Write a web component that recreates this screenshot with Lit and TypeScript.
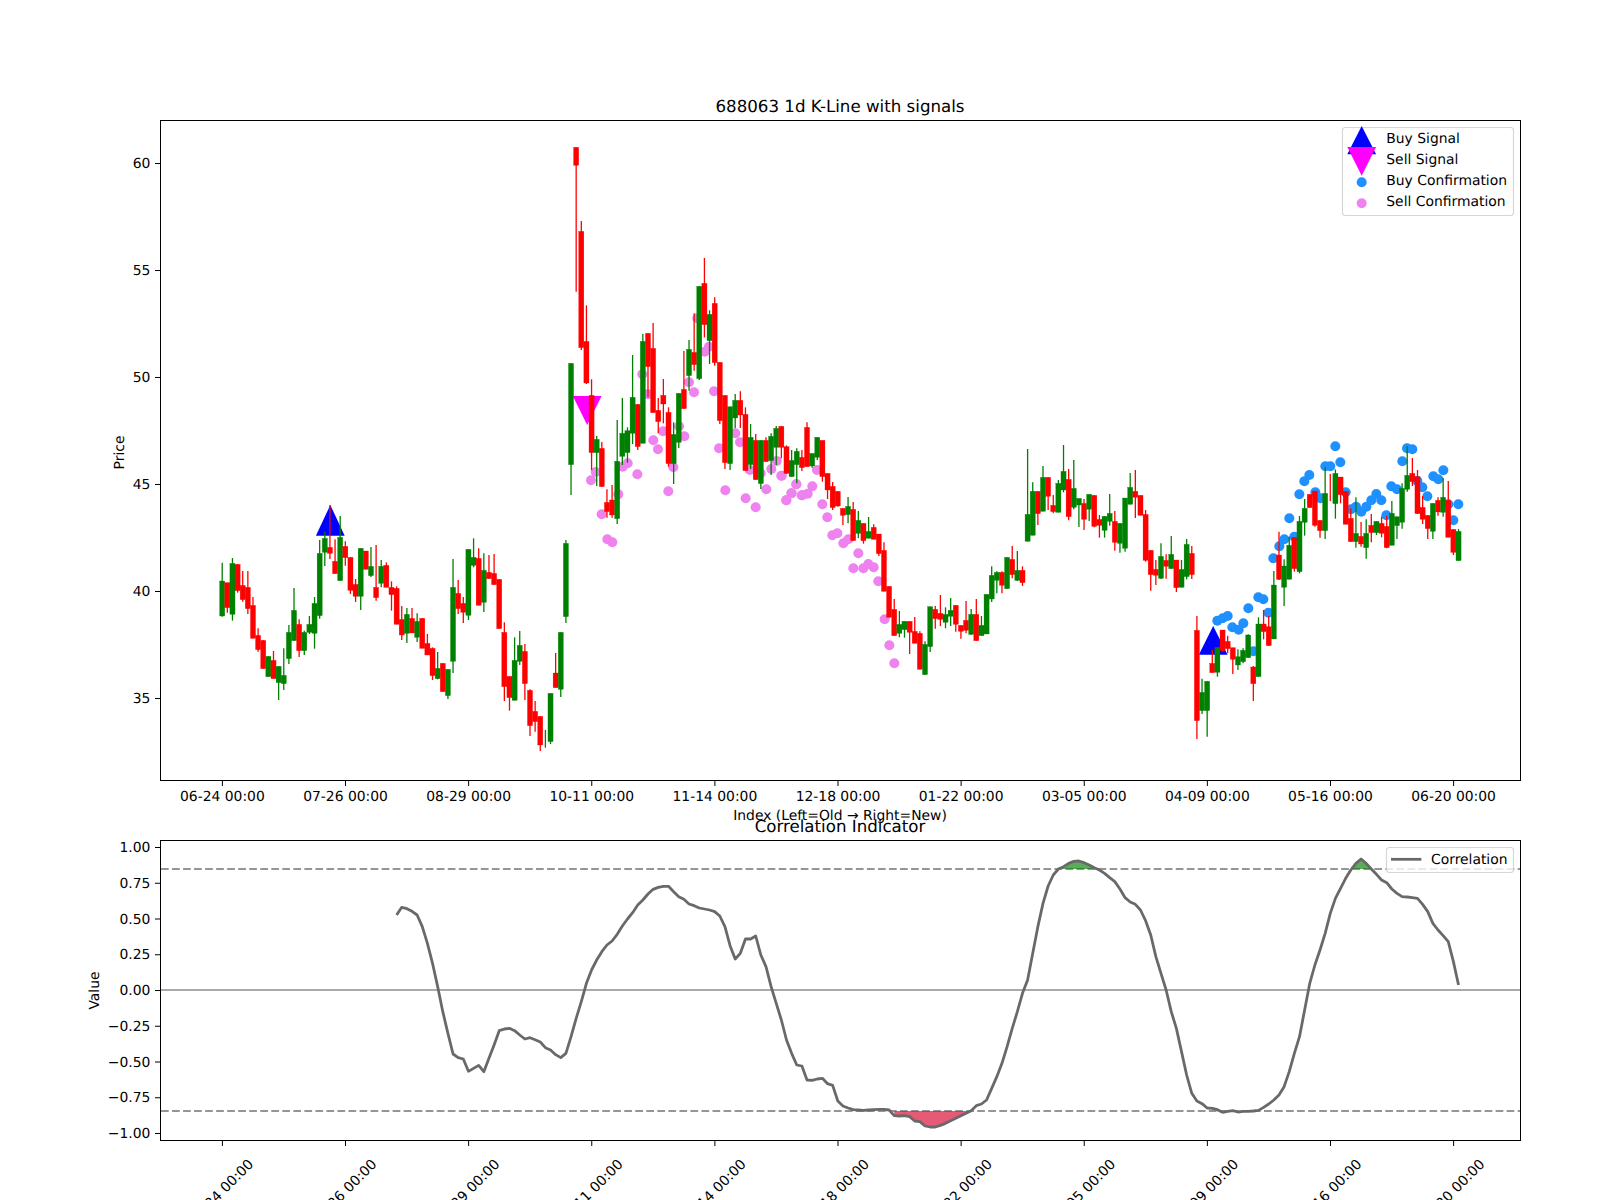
import { LitElement, html, svg, css, nothing } from "lit";
import { customElement } from "lit/decorators.js";

/* Candles measured from the chart: colour, then wick top, body top, body bottom, wick bottom, in pixels from each segment's origin at 1/3 px units. */
type Candle = { up: boolean; wt: number; bt: number; bb: number; wb: number };

function seg(off: number, rows: string): Candle[] {
  return rows
    .trim()
    .split(/\s+/)
    .map((r) => {
      const [wt, bt, bb, wb] = r.slice(1).split(",").map((n) => off + Number(n) / 3);
      return { up: r[0] === "r", wt, bt, bb, wb };
    });
}

const candles: Candle[] = [
  ...seg(480, `g248,303,408,410 r308,308,383,398 g234,250,403,422 r253,253,332,338 r273,316,359,365 r273,322,386,402
  r351,376,475,475 r445,466,509,515 r481,481,566,566 g529,529,590,590 r513,541,596,597 g559,559,608,660 g505,586,611,630
  g435,457,536,552 g324,391,482,482 r418,433,512,531 g452,457,512,525 g408,433,457,462 g351,370,460,506 g180,220,407,416
  g155,175,217,258 r75,202,220,237 r178,244,281,281 g108,172,302,302 r184,199,233,257 r232,232,331,342 r297,313,349,366
  g205,205,349,390 r213,213,268,268 g201,259,287,291 r195,322,353,362 g240,259,310,322 r247,256,322,322 r304,322,344,392
  r319,325,433,433 r378,418,465,480 g384,403,460,489 r384,415,459,459 g400,424,472,486 r415,415,505,505 r462,490,525,525
  r502,505,587,600 g516,565,596,598 r550,550,635,635 g568,568,647,657 g237,322,544,579 r300,340,386,402 r351,370,397,429
  g208,208,406,420 g175,232,256,262 r205,235,376,376 g220,271,367,396 r225,277,296,296 r222,280,314,314 r298,298,446,446
  r427,457,620,663 r589,589,653,692 g472,541,661,661 g453,496,544,555 r492,514,611,660 r628,631,737,768 r663,694,725,755
  r709,709,795,813 g750,783,785,803 g640,640,785,792 r519,579,623,623 g457,457,628,651 g180,190,410,429`),
  ...seg(130, `g700,700,1004,1095 r52,52,106,485 r273,304,653,660 r526,634,759,762 r748,796,968,1020 g918,928,968,1068
  r936,955,1070,1070 r1078,1117,1145,1163 r1065,1110,1155,1163 g870,994,1166,1182 g804,910,979,1005 g892,902,968,998
  g675,802,910,942 r823,823,950,960 g612,634,940,940 r610,610,710,802 r579,655,848,848 r804,841,875,910 r747,796,822,880
  r832,847,1001,1010 g877,913,1001,1062 g790,790,937,954 r663,778,836,836 g630,658,737,782 r550,667,704,722 g469,469,746,750
  r384,460,584,622 g541,553,632,702 r502,520,698,707 r697,697,872,882 r796,796,998,1017 g830,830,1001,1020 g792,811,864,895
  r784,811,855,894 r832,853,1022,1022 g882,922,1004,1017 r912,931,1049,1049 g931,931,1061,1077 r922,931,995,995
  g910,919,992,1035 g888,895,952,1005 r889,889,952,985 r946,950,1030,1032 g960,991,1040,1040 g955,964,1004,1060`),
  ...seg(380, `r210,232,263,273 r127,142,260,260 g222,220,258,263 g172,172,232,240 r181,181,290,305 r280,280,330,357 r306,319,383,390
  r334,334,378,380 r385,385,406,435 g351,379,404,430 r366,388,482,482 g393,421,460,475 r430,430,482,491 g411,454,475,475
  r433,442,478,478 r462,462,521,528 r487,511,634,634 r619,619,712,712 r657,688,767,767 g693,733,760,772 g724,724,749,773
  r724,724,757,822 r711,754,790,790 r754,760,868,868 g784,793,884,884 g680,680,800,816 r678,688,716,746 r645,700,718,738
  g682,703,727,745 g654,691,709,738 r676,676,733,755 r736,736,754,776 r663,721,751,760 g687,703,763,765 r657,703,782,782
  g708,736,767,767 g643,643,762,762 g559,586,657,666 g574,577,601,640 r574,577,616,640 g532,532,626,626 r498,538,584,595
  g513,571,601,603 r559,571,608,618 g207,403,484,484 g307,334,466,466 r334,334,401,435 g258,292,394,394 r292,292,349,390
  r345,376,395,400 g300,310,397,397 g195,274,330,337 r267,298,410,421 g240,325,382,388 g360,355,375,441 r357,370,418,450
  g343,343,388,423 r346,346,439,442 r405,418,436,473 g408,409,451,473 g342,400,424,437 r393,424,487,512 g430,430,490,518
  g354,354,505,515 g279,322,373,373 r270,334,352,414 r346,346,406,406 r390,403,541,545 r511,511,584,632 r540,568,586,615
  g490,529,595,597 r523,541,559,596 g468,523,566,566 r540,540,623,636`),
  ...seg(420, `g420,448,502,502 g357,373,470,478 r378,400,464,477 r588,631,902,957 g776,817,872,882 g784,784,872,950 r690,730,758,758
  g682,682,757,770 r630,630,692,696 r647,664,686,700 r683,683,718,762 g688,710,735,750 g685,691,725,730 g643,645,713,713
  r738,741,791,843 g592,612,770,770`),
  ...seg(580, `r90,132,155,178 r108,140,197,197`),
  ...seg(420, `g453,495,657,657 r335,405,478,480 g418,438,502,558 g350,376,478,478 r352,352,446,455 g288,304,455,460 g237,265,307,347
  r223,223,263,263 r213,213,316,320 r301,301,332,353 g141,220,332,357 r162,200,201,243 g148,160,251,296 r171,171,224,250
  r214,214,313,313 r265,295,365,365 g232,340,365,383 r306,349,372,380 g298,340,383,416 r282,316,338,367 g304,304,338,345
  r290,310,340,352 r288,319,383,385 g243,280,376,376 g290,290,317,357 g190,205,307,326 g78,166,208,215 r114,160,185,198
  r150,170,281,282 r228,262,298,312 r285,286,326,357 g250,250,334,357 r232,241,276,287 g174,232,277,290 r183,241,352,352
  r328,328,397,405 g327,334,422,422`),
];

const STEP = 5.13;
const barX = (i: number) => 222.2 + STEP * i;

const pts = (ox: number, oy: number, s: string): [number, number][] =>
  s.trim().split(/\s+/).map((p) => {
    const [a, b] = p.split(",").map(Number);
    return [ox + a / 3, oy + b / 3];
  });

const sellDots: [number, number][] = [
  ...pts(540, 130, `153,1051 167,1026 185,1153 202,1228 217,1237 235,1093 248,1010 263,1000 292,1033 307,733 323,793 340,931 354,958
   369,904 400,1012 385,1084 417,889 433,919 447,757 462,787 472,565 494,665 507,650 522,784 537,955 556,1081 586,910 600,937
   617,1105 630,1020 647,1132 662,1030 679,1078 694,1017 710,993 724,1037 739,1111 755,1090 769,1063 785,1096`),
  ...pts(780, 380, `5,287 19,361 34,340 49,313 67,346 83,341 97,319 111,270 127,373 142,412 157,466 172,460 190,490 205,478 235,520 220,565
   250,565 265,552 281,562 295,604 314,718 328,796 343,850`),
];

const buyDots: [number, number][] = [
  ...pts(1180, 580, `112,122 128,115 143,108 157,142 176,149 190,130 205,85 220,214`),
  ...pts(1240, 420, `55,532 70,538 85,578 100,415 118,379 133,358 148,295 163,350 178,223 193,184 208,165 226,217 241,235 256,139 271,139
   286,79 301,127 317,217 333,268 348,260 364,275 379,260 394,241 409,222 424,241 439,286 454,199 471,208 487,124 501,85 517,88
   532,183 547,202 562,229 580,169 595,178 610,151 625,253 640,301 655,253`),
];

/* Correlation curve: one pixel row per bar from bar 34 on. */
const corrRows = `435 412 416 424 435 470 520 580 650 725 790 852 863 867 904 895 886 905 865 825 782 777 775 782 795 807 803 809 816 833
 840 854 863 850 800 745 695 640 600 570 545 525 513 493 468 447 428 405 390 372 358 352 349 349 365 380 388 402 407 414 417 420 425 438
 470 527 567 550 507 507 498 555 590 650 700 750 810 850 885 888 930 931 927 925 941 946 993 1008 1014 1019 1020 1021 1020 1019 1018 1018
 1020 1037 1038 1037 1040 1053 1055 1068 1071 1071 1066 1060 1052 1045 1037 1030 1022 1007 1002 990 955 920 880 830 775 725 670 630 550
 470 400 348 315 297 290 280 274 273 278 285 293 300 310 323 335 357 383 396 403 420 452 495 560 610 660 725 775 845 915 970 993 1001
 1014 1015 1019 1027 1024 1022 1026 1024 1024 1023 1021 1012 1002 990 975 950 905 850 800 720 640 585 540 490 430 385 355 325 300 280
 267 280 297 313 330 338 357 370 380 381 383 385 403 425 460 480 497 515 575 645`;
const corr: [number, number][] = corrRows
  .trim()
  .split(/\s+/)
  .map((r, k) => [barX(34 + k), 770 + Number(r) / 3]);

const poly = (p: [number, number][]) => p.map(([x, y]) => `${x.toFixed(2)},${y.toFixed(2)}`).join(" ");

const corrIdx = (bar: number) => bar - 34;
const upperY = 869;
const lowerY = 1111;
function band(from: number, to: number, limit: number, below: boolean) {
  const part = corr.slice(corrIdx(from), corrIdx(to) + 1);
  const clamped = part.map(([x, y]) => [x, below ? Math.max(y, limit) : Math.min(y, limit)] as [number, number]);
  return poly([...clamped, [part[part.length - 1][0], limit], [part[0][0], limit]]);
}

const priceTicks = [60, 55, 50, 45, 40, 35];
const priceY = (p: number) => 163.5 + (60 - p) * 21.4;
const valueTicks = ["1.00", "0.75", "0.50", "0.25", "0.00", "−0.25", "−0.50", "−0.75", "−1.00"];
const valueY = (k: number) => 847.5 + k * 35.75;
const dateLabels = ["06-24 00:00", "07-26 00:00", "08-29 00:00", "10-11 00:00", "11-14 00:00", "12-18 00:00", "01-22 00:00", "03-05 00:00", "04-09 00:00", "05-16 00:00", "06-20 00:00"];
const dateX = (k: number) => 222.4 + 123.12 * k;

const upTri = (cx: number, top: number, bot: number) => `${cx},${top} ${cx + 14.4},${bot} ${cx - 14.4},${bot}`;
const downTri = (cx: number, top: number, bot: number) => `${cx - 14.4},${top} ${cx + 14.4},${top} ${cx},${bot}`;

@customElement("app-root")
export class AppRoot extends LitElement {
  static styles = css`
    :host { display: block; width: 1600px; height: 1200px; background: #fff; overflow: hidden; }
    svg { display: block; }
    text { font-family: "DejaVu Sans", sans-serif; font-size: 13.89px; fill: #000; text-rendering: geometricPrecision; }
    .title { font-size: 16.67px; text-anchor: middle; }
    .mid { text-anchor: middle; }
    .end { text-anchor: end; }
    .frame { fill: none; stroke: #000; stroke-width: 1; }
    .tick { stroke: #000; stroke-width: 1; }
    .up-wick { stroke: #f00; stroke-width: 1.3; }
    .down-wick { stroke: #008000; stroke-width: 1.3; }
    .up-body { fill: #f00; stroke: #f00; stroke-width: 0.3; }
    .down-body { fill: #008000; stroke: #008000; stroke-width: 0.3; }
    .buy-tri { fill: #0000ff; }
    .sell-tri { fill: #ff00ff; }
    .buy-dot { fill: #1e90ff; }
    .sell-dot { fill: #ee82ee; }
    .legend { fill: #fff; fill-opacity: 0.8; stroke: #ccc; stroke-opacity: 0.8; stroke-width: 1.1; }
    .zero { stroke: #aaa; stroke-width: 2.08; }
    .dash { stroke: #959595; stroke-width: 2.08; stroke-dasharray: 7.7 3.33; }
    .curve { fill: none; stroke: #696969; stroke-width: 2.78; stroke-linejoin: round; }
    .fill-red { fill: #dc143c; fill-opacity: 0.7; }
    .fill-green { fill: #008000; fill-opacity: 0.65; }
  `;

  render() {
    return html`<svg width="1600" height="1200" viewBox="0 0 1600 1200" xmlns="http://www.w3.org/2000/svg">
      <text class="title" x="840" y="111.5">688063 1d K-Line with signals</text>

      ${svg`<polygon class="buy-tri" points=${upTri(330.3, 505, 535.7)}></polygon>
        <polygon class="buy-tri" points=${upTri(1213.2, 626, 654.7)}></polygon>
        <polygon class="sell-tri" points=${downTri(587.2, 396, 425)}></polygon>`}
      ${sellDots.map(([x, y]) => svg`<circle class="sell-dot" cx=${x} cy=${y} r="5"></circle>`)}
      ${buyDots.map(([x, y]) => svg`<circle class="buy-dot" cx=${x} cy=${y} r="5"></circle>`)}
      ${candles.map((c, i) => {
        const x = barX(i);
        return svg`<line class=${c.up ? "up-wick" : "down-wick"} x1=${x} x2=${x} y1=${c.wt} y2=${c.wb}></line>
          ${c.bb - c.bt > 1
            ? svg`<rect class=${c.up ? "up-body" : "down-body"} x=${x - 2.55} y=${c.bt} width="5.1" height=${c.bb - c.bt}></rect>`
            : nothing}`;
      })}

      ${svg`<rect class="legend" x="1342.5" y="127.5" width="171" height="88" rx="3"></rect>
        <polygon class="buy-tri" points=${upTri(1361.7, 126, 154.3)}></polygon>
        <polygon class="sell-tri" points=${downTri(1361.7, 147, 175.7)}></polygon>
        <circle class="buy-dot" cx="1361.7" cy="182.3" r="5"></circle>
        <circle class="sell-dot" cx="1361.7" cy="203.3" r="5"></circle>
        <text x="1386.3" y="143">Buy Signal</text>
        <text x="1386.3" y="164">Sell Signal</text>
        <text x="1386.3" y="185">Buy Confirmation</text>
        <text x="1386.3" y="206">Sell Confirmation</text>
        <rect class="frame" x="160.5" y="120.5" width="1360" height="660"></rect>`}

      ${priceTicks.map((p) => svg`<line class="tick" x1="155" x2="160" y1=${priceY(p)} y2=${priceY(p)}></line>
        <text class="end" x="150.3" y=${priceY(p) + 4.5}>${p}</text>`)}
      ${dateLabels.map((d, k) => svg`<line class="tick" x1=${dateX(k)} x2=${dateX(k)} y1="781" y2="786"></line>
        <text class="mid" x=${dateX(k)} y="801">${d}</text>`)}
      <text class="mid" x="840" y="820">Index (Left=Old → Right=New)</text>
      <text class="mid" transform="translate(124 452.5) rotate(-90)">Price</text>

      <text class="title" x="840" y="832">Correlation Indicator</text>
      <line class="zero" x1="160" x2="1520" y1="990" y2="990"></line>
      <line class="dash" x1="161" x2="1520" y1=${upperY} y2=${upperY}></line>
      <line class="dash" x1="161" x2="1520" y1=${lowerY} y2=${lowerY}></line>
      <polygon class="fill-red" points=${band(131, 146, lowerY, true)}></polygon>
      <polygon class="fill-green" points=${band(163, 171, upperY, false)}></polygon>
      <polygon class="fill-green" points=${band(220, 224, upperY, false)}></polygon>
      <polyline class="curve" points=${poly(corr)}></polyline>

      ${svg`<rect class="legend" x="1386.5" y="847.5" width="127" height="25" rx="3"></rect>
        <line class="curve" x1="1391" x2="1421.4" y1="859.3" y2="859.3"></line>
        <text x="1431" y="864">Correlation</text>
        <rect class="frame" x="160.5" y="840.5" width="1360" height="300"></rect>`}

      ${valueTicks.map((t, k) => svg`<line class="tick" x1="155" x2="160" y1=${valueY(k)} y2=${valueY(k)}></line>
        <text class="end" x="150.3" y=${valueY(k) + 4.5}>${t}</text>`)}
      <text class="mid" transform="translate(99 990.5) rotate(-90)">Value</text>
      ${dateLabels.map((d, k) => svg`<line class="tick" x1=${dateX(k)} x2=${dateX(k)} y1="1141" y2="1146"></line>
        <text class="mid" transform="translate(${dateX(k) + 2} 1195) rotate(-45)">${d}</text>`)}
    </svg>`;
  }
}
